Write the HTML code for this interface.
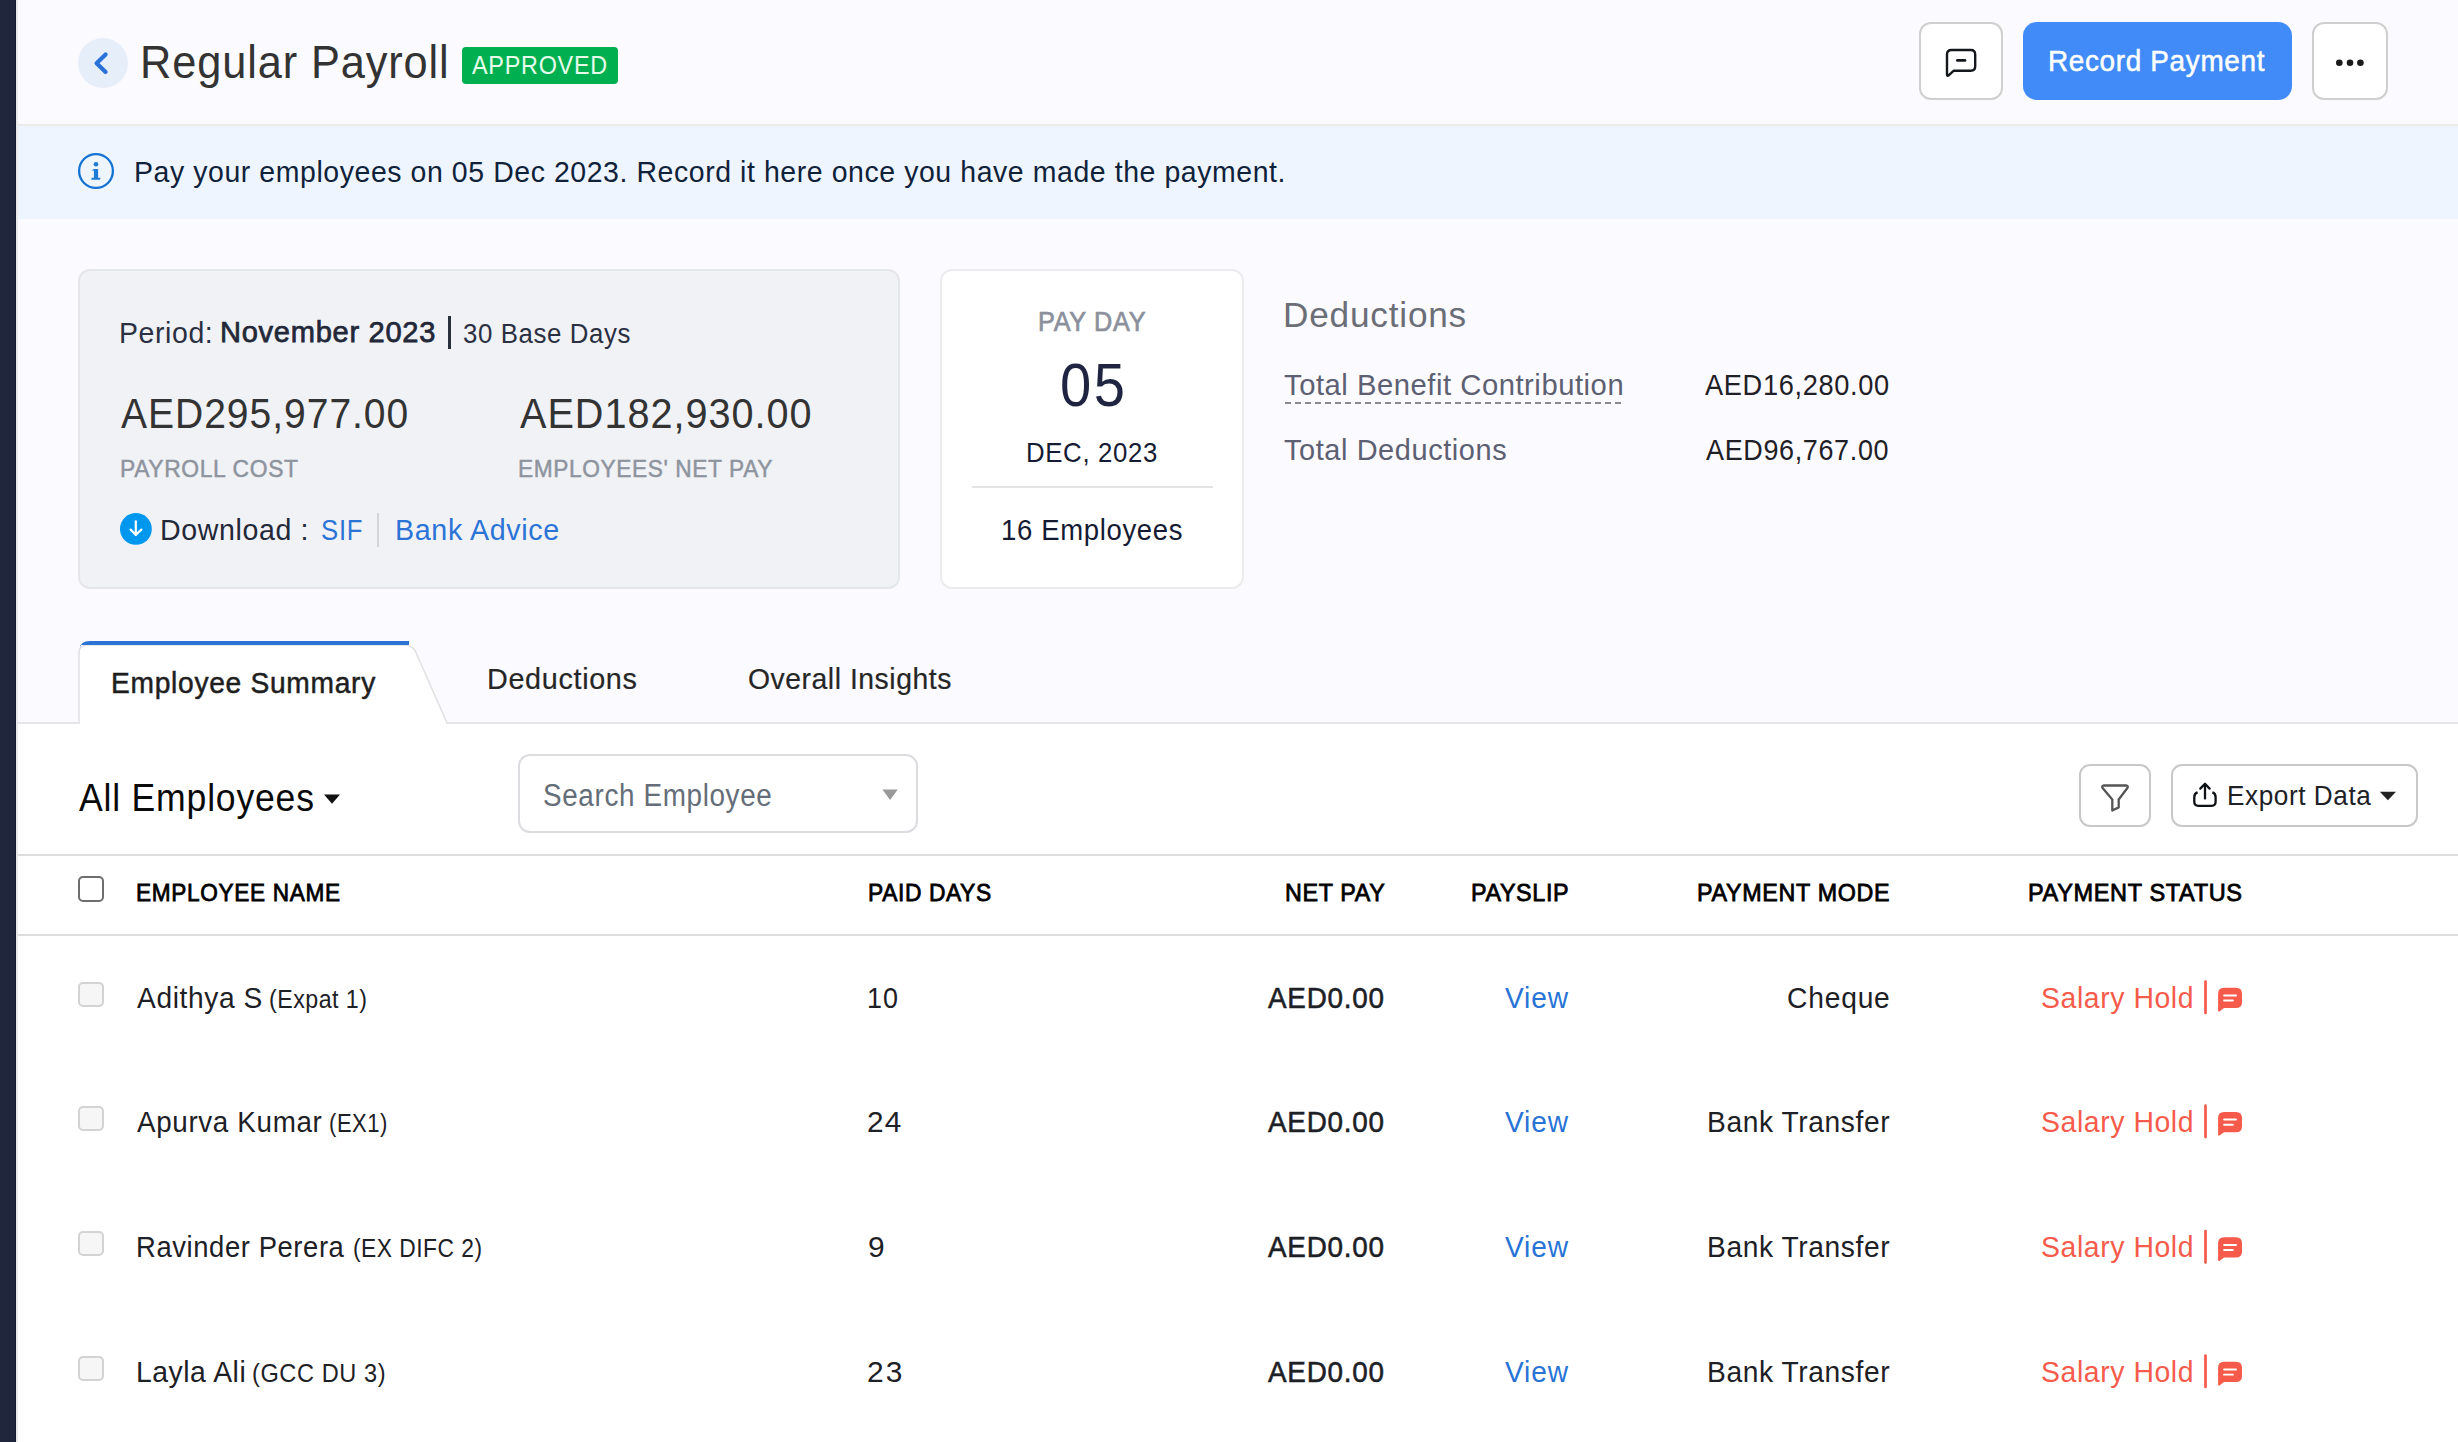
<!DOCTYPE html>
<html><head><meta charset="utf-8"><style>
*{margin:0;padding:0;box-sizing:border-box}
html,body{width:2458px;height:1442px;overflow:hidden;background:#fff;font-family:"Liberation Sans",sans-serif}
.a{position:absolute}
.t{position:absolute;white-space:pre}
</style></head><body>
<div class="a" style="left:0px;top:0px;width:15px;height:1442px;background:#20263B"></div><div class="a" style="left:15px;top:0px;width:1px;height:1442px;background:#151B2F"></div><div class="a" style="left:16px;top:0px;width:2px;height:1442px;background:#EAEAEA"></div><div class="a" style="left:18px;top:0px;width:2440px;height:124px;background:#FBFAFE"></div><div class="a" style="left:18px;top:124px;width:2440px;height:2px;background:#EBEBEA"></div><div class="a" style="left:18px;top:126px;width:2440px;height:93px;background:#EEF5FE"></div><div class="a" style="left:18px;top:219px;width:2440px;height:503px;background:#FBFAFE"></div><div class="a" style="left:18px;top:722px;width:2440px;height:2px;background:#E6E6E8"></div><div class="a" style="left:78px;top:38px;width:50px;height:50px;background:#E6EEF9;border-radius:50%"></div><div class="a" style="left:462px;top:47px;width:156px;height:37px;background:#00B050;border-radius:4px"></div><div class="a" style="left:1919px;top:22px;width:84px;height:78px;background:#fff;border:2px solid #CFCFCF;border-radius:12px"></div><div class="a" style="left:2023px;top:22px;width:269px;height:78px;background:#418BF9;border-radius:14px"></div><div class="a" style="left:2312px;top:22px;width:76px;height:78px;background:#fff;border:2px solid #CFCFCF;border-radius:12px"></div><div class="a" style="left:78px;top:269px;width:822px;height:320px;background:#F1F2F6;border:2px solid #E5E6EA;border-radius:12px"></div><div class="a" style="left:448px;top:316px;width:3px;height:33px;background:#2A2F3E"></div><div class="a" style="left:377px;top:513px;width:2px;height:34px;background:#D3D5DA"></div><div class="a" style="left:940px;top:269px;width:304px;height:320px;background:#fff;border:2px solid #EBEBF0;border-radius:12px"></div><div class="a" style="left:972px;top:486px;width:241px;height:2px;background:#E3E3E6"></div><div class="a" style="left:1285px;top:402px;width:338px;height:2px;background:repeating-linear-gradient(90deg,#8A8A8A 0 6px,transparent 6px 10px)"></div><div class="a" style="left:518px;top:754px;width:400px;height:79px;background:#fff;border:2px solid #DCDCE0;border-radius:12px"></div><div class="a" style="left:18px;top:854px;width:2440px;height:2px;background:#DCDCDD"></div><div class="a" style="left:2079px;top:764px;width:72px;height:63px;background:#fff;border:2px solid #C8C8C8;border-radius:11px"></div><div class="a" style="left:2171px;top:764px;width:247px;height:63px;background:#fff;border:2px solid #C8C8C8;border-radius:11px"></div><div class="a" style="left:78px;top:876px;width:26px;height:26px;background:#fff;border:2px solid #6E6E70;border-radius:5px"></div><div class="a" style="left:18px;top:934px;width:2440px;height:2px;background:#DCDCDD"></div><div class="a" style="left:78px;top:982px;width:26px;height:25px;background:#F6F6F6;border:2px solid #D3D3D3;border-radius:5px"></div><div class="a" style="left:78px;top:1106px;width:26px;height:25px;background:#F6F6F6;border:2px solid #D3D3D3;border-radius:5px"></div><div class="a" style="left:78px;top:1231px;width:26px;height:25px;background:#F6F6F6;border:2px solid #D3D3D3;border-radius:5px"></div><div class="a" style="left:78px;top:1356px;width:26px;height:25px;background:#F6F6F6;border:2px solid #D3D3D3;border-radius:5px"></div>
<svg class="a" style="left:0;top:0" width="2458" height="1442" viewBox="0 0 2458 1442"><path d="M79,723 L79,653 Q79,645 87,645 L404,645 Q411,645 415,650.5 L447,723 Z" fill="#fff" stroke="#E2E2E4" stroke-width="1.6"/><path d="M80,649 Q80,641 90,641 L409,641 L409,645 L80,645 Z" fill="#2B73D4"/><rect x="18" y="722" width="2440" height="2" fill="#E6E6E8"/><rect x="80" y="722" width="366" height="3" fill="#fff"/><path d="M105.6,54.4 L96.6,63.2 L105.6,71.9" fill="none" stroke="#2A72D8" stroke-width="4.2" stroke-linecap="round" stroke-linejoin="round"/><path d="M1947,74.5 L1947,54.5 Q1947,50 1951.5,50 L1970.7,50 Q1975.2,50 1975.2,54.5 L1975.2,66.2 Q1975.2,70.7 1970.7,70.7 L1953.8,70.7 L1948.6,75.4 Q1947,76.3 1947,74.5 Z" fill="none" stroke="#14171C" stroke-width="2.4" stroke-linejoin="round"/><path d="M1957.3,60.4 L1965,60.4" stroke="#14171C" stroke-width="2.6" stroke-linecap="round"/><circle cx="2339.3" cy="62.7" r="3.3" fill="#1A1A1A"/><circle cx="2350" cy="62.7" r="3.3" fill="#1A1A1A"/><circle cx="2360.4" cy="62.7" r="3.3" fill="#1A1A1A"/><circle cx="96" cy="171" r="16.9" fill="none" stroke="#1473D3" stroke-width="2.3"/><circle cx="96" cy="164.2" r="2.3" fill="#1E7BD6"/><path d="M91.5,170.6 L93.9,168.9 L98.1,168.9 L98.1,177.8 L100.5,177.8 L100,179.8 L91.2,179.8 L91.8,177.8 L93.9,177.8 L93.9,170.6 Z" fill="#1E7BD6"/><circle cx="135.9" cy="528.9" r="15.9" fill="#0098EE"/><path d="M135.8,521.3 L135.8,535" stroke="#fff" stroke-width="2.2" stroke-linecap="round"/><path d="M130.6,529.6 L135.8,534.8 L141.4,529.6" fill="none" stroke="#fff" stroke-width="2.2" stroke-linecap="round" stroke-linejoin="round"/><path d="M324,794.4 L340,794.4 L332,803.7 Z" fill="#111"/><path d="M882.4,789.4 L897.8,789.4 L890.1,800 Z" fill="#999"/><path d="M2103.5,785.5 L2126.5,785.5 Q2128.5,786 2127.4,788 L2118.7,799.5 L2118.7,807.4 L2112.3,810.5 L2112.3,799.5 L2102.6,788 Q2101.5,786 2103.5,785.5 Z" fill="none" stroke="#555" stroke-width="2.3" stroke-linejoin="round"/><path d="M2205,798.5 L2205,784.5 M2200.3,788.6 L2205,783.8 L2209.6,788.6" fill="none" stroke="#0E1116" stroke-width="2.3" stroke-linecap="round" stroke-linejoin="round"/><path d="M2197.6,792.3 Q2194.3,793.3 2194.3,797 L2194.3,801.8 Q2194.3,805.8 2198.3,805.8 L2211.6,805.8 Q2215.6,805.8 2215.6,801.8 L2215.6,797 Q2215.6,793.3 2212.4,792.3" fill="none" stroke="#0E1116" stroke-width="2.3" stroke-linecap="butt"/><path d="M2379.8,791.8 L2396,791.8 L2387.9,800.2 Z" fill="#222"/><path d="M2205.5,981.5 L2205.5,1012.9" stroke="#F65A4A" stroke-width="2.7" stroke-linecap="round"/><path d="M2224,987.7 L2236,987.7 Q2242,987.7 2242,993.7 L2242,1002.0 Q2242,1008.0 2236,1008.0 L2224,1008.0 L2219.5,1011.4 Q2218.1,1012.0 2218.1,1010.4 L2218.1,993.7 Q2218.1,987.7 2224,987.7 Z" fill="#F65A4A"/><rect x="2223.1" y="994.4" width="13.9" height="2" rx="1" fill="#fff"/><rect x="2223.1" y="999.6" width="10.7" height="1.9" rx="0.9" fill="#fff"/><path d="M2205.5,1105.7 L2205.5,1137.1" stroke="#F65A4A" stroke-width="2.7" stroke-linecap="round"/><path d="M2224,1111.9 L2236,1111.9 Q2242,1111.9 2242,1117.9 L2242,1126.2 Q2242,1132.2 2236,1132.2 L2224,1132.2 L2219.5,1135.6 Q2218.1,1136.2 2218.1,1134.6 L2218.1,1117.9 Q2218.1,1111.9 2224,1111.9 Z" fill="#F65A4A"/><rect x="2223.1" y="1118.6" width="13.9" height="2" rx="1" fill="#fff"/><rect x="2223.1" y="1123.8" width="10.7" height="1.9" rx="0.9" fill="#fff"/><path d="M2205.5,1231.0 L2205.5,1262.4" stroke="#F65A4A" stroke-width="2.7" stroke-linecap="round"/><path d="M2224,1237.2 L2236,1237.2 Q2242,1237.2 2242,1243.2 L2242,1251.5 Q2242,1257.5 2236,1257.5 L2224,1257.5 L2219.5,1260.9 Q2218.1,1261.5 2218.1,1259.9 L2218.1,1243.2 Q2218.1,1237.2 2224,1237.2 Z" fill="#F65A4A"/><rect x="2223.1" y="1243.9" width="13.9" height="2" rx="1" fill="#fff"/><rect x="2223.1" y="1249.1" width="10.7" height="1.9" rx="0.9" fill="#fff"/><path d="M2205.5,1355.6 L2205.5,1387.0" stroke="#F65A4A" stroke-width="2.7" stroke-linecap="round"/><path d="M2224,1361.8 L2236,1361.8 Q2242,1361.8 2242,1367.8 L2242,1376.1 Q2242,1382.1 2236,1382.1 L2224,1382.1 L2219.5,1385.5 Q2218.1,1386.1 2218.1,1384.5 L2218.1,1367.8 Q2218.1,1361.8 2224,1361.8 Z" fill="#F65A4A"/><rect x="2223.1" y="1368.5" width="13.9" height="2" rx="1" fill="#fff"/><rect x="2223.1" y="1373.7" width="10.7" height="1.9" rx="0.9" fill="#fff"/></svg>
<div class="t" style="left:140.20px;top:38.70px;font-size:46.948px;line-height:46.948px;letter-spacing:0.935px;color:#333333;font-weight:normal;transform:scaleX(0.9242);transform-origin:0 0">Regular Payroll</div>
<div class="t" style="left:472.00px;top:52.00px;font-size:26.018px;line-height:26.018px;letter-spacing:0.851px;color:#E6FCEB;font-weight:normal;transform:scaleX(0.8982);transform-origin:0 0">APPROVED</div>
<div class="t" style="left:2048.41px;top:46.05px;font-size:29.506px;line-height:29.506px;letter-spacing:0.699px;color:#FFFFFF;font-weight:normal;-webkit-text-stroke:0.5px #FFFFFF;transform:scaleX(0.9459);transform-origin:0 0">Record Payment</div>
<div class="t" style="left:134.21px;top:156.85px;font-size:30.160px;line-height:30.160px;letter-spacing:0.608px;color:#10223A;font-weight:normal;transform:scaleX(0.9435);transform-origin:0 0">Pay your employees on 05 Dec 2023. Record it here once you have made the payment.</div>
<div class="t" style="left:119.31px;top:318.40px;font-size:30.088px;line-height:30.088px;letter-spacing:0.632px;color:#2A3042;font-weight:normal;transform:scaleX(0.9463);transform-origin:0 0">Period:</div>
<div class="t" style="left:220.14px;top:317.40px;font-size:29.724px;line-height:29.724px;letter-spacing:0.726px;color:#232838;font-weight:normal;-webkit-text-stroke:0.75px #232838;transform:scaleX(0.9784);transform-origin:0 0">November 2023</div>
<div class="t" style="left:462.68px;top:319.40px;font-size:28.198px;line-height:28.198px;letter-spacing:0.659px;color:#2A3042;font-weight:normal;transform:scaleX(0.9159);transform-origin:0 0">30 Base Days</div>
<div class="t" style="left:121.00px;top:392.00px;font-size:42.879px;line-height:42.879px;letter-spacing:1.045px;color:#333333;font-weight:normal;transform:scaleX(0.9115);transform-origin:0 0">AED295,977.00</div>
<div class="t" style="left:519.80px;top:392.00px;font-size:42.879px;line-height:42.879px;letter-spacing:1.045px;color:#333333;font-weight:normal;transform:scaleX(0.9249);transform-origin:0 0">AED182,930.00</div>
<div class="t" style="left:119.84px;top:456.80px;font-size:24.564px;line-height:24.564px;letter-spacing:0.689px;color:#8E949E;font-weight:normal;-webkit-text-stroke:0.5px #8E949E;transform:scaleX(0.9305);transform-origin:0 0">PAYROLL COST</div>
<div class="t" style="left:517.75px;top:456.80px;font-size:24.564px;line-height:24.564px;letter-spacing:0.640px;color:#8E949E;font-weight:normal;-webkit-text-stroke:0.5px #8E949E;transform:scaleX(0.9258);transform-origin:0 0">EMPLOYEES' NET PAY</div>
<div class="t" style="left:159.80px;top:515.40px;font-size:30.088px;line-height:30.088px;letter-spacing:0.676px;color:#232838;font-weight:normal;transform:scaleX(0.9488);transform-origin:0 0">Download :</div>
<div class="t" style="left:320.89px;top:515.40px;font-size:30.088px;line-height:30.088px;letter-spacing:0.917px;color:#2B74D6;font-weight:normal;transform:scaleX(0.8553);transform-origin:0 0">SIF</div>
<div class="t" style="left:394.99px;top:515.40px;font-size:30.088px;line-height:30.088px;letter-spacing:0.675px;color:#2B74D6;font-weight:normal;transform:scaleX(0.9535);transform-origin:0 0">Bank Advice</div>
<div class="t" style="left:1038.04px;top:308.96px;font-size:27.050px;line-height:27.050px;letter-spacing:0.750px;color:#8B909C;font-weight:normal;-webkit-text-stroke:0.7px #8B909C;transform:scaleX(0.9324);transform-origin:0 0">PAY DAY</div>
<div class="t" style="left:1059.75px;top:355.10px;font-size:60.757px;line-height:60.757px;letter-spacing:2.625px;color:#1F2540;font-weight:normal;transform:scaleX(0.9250);transform-origin:0 0">05</div>
<div class="t" style="left:1026.25px;top:439.05px;font-size:27.835px;line-height:27.835px;letter-spacing:0.693px;color:#151B33;font-weight:normal;transform:scaleX(0.9268);transform-origin:0 0">DEC, 2023</div>
<div class="t" style="left:1001.05px;top:515.00px;font-size:29.797px;line-height:29.797px;letter-spacing:0.705px;color:#151B33;font-weight:normal;transform:scaleX(0.9239);transform-origin:0 0">16 Employees</div>
<div class="t" style="left:1283.24px;top:297.80px;font-size:35.611px;line-height:35.611px;letter-spacing:0.806px;color:#6B6E77;font-weight:normal;transform:scaleX(0.9881);transform-origin:0 0">Deductions</div>
<div class="t" style="left:1284.12px;top:370.00px;font-size:29.797px;line-height:29.797px;letter-spacing:0.550px;color:#5C6072;font-weight:normal;transform:scaleX(0.9801);transform-origin:0 0">Total Benefit Contribution</div>
<div class="t" style="left:1704.50px;top:369.80px;font-size:29.361px;line-height:29.361px;letter-spacing:0.720px;color:#1F2026;font-weight:normal;transform:scaleX(0.9261);transform-origin:0 0">AED16,280.00</div>
<div class="t" style="left:1284.11px;top:434.60px;font-size:29.361px;line-height:29.361px;letter-spacing:0.597px;color:#5C6072;font-weight:normal;transform:scaleX(0.9850);transform-origin:0 0">Total Deductions</div>
<div class="t" style="left:1706.20px;top:434.60px;font-size:29.361px;line-height:29.361px;letter-spacing:0.720px;color:#1F2026;font-weight:normal;transform:scaleX(0.9176);transform-origin:0 0">AED96,767.00</div>
<div class="t" style="left:111.43px;top:668.80px;font-size:28.634px;line-height:28.634px;letter-spacing:0.711px;color:#1E1E1E;font-weight:normal;-webkit-text-stroke:0.5px #1E1E1E;transform:scaleX(0.9848);transform-origin:0 0">Employee Summary</div>
<div class="t" style="left:486.85px;top:664.20px;font-size:29.506px;line-height:29.506px;letter-spacing:0.671px;color:#262626;font-weight:normal;-webkit-text-stroke:0.2px #262626;transform:scaleX(0.9759);transform-origin:0 0">Deductions</div>
<div class="t" style="left:747.54px;top:664.20px;font-size:29.506px;line-height:29.506px;letter-spacing:0.558px;color:#262626;font-weight:normal;-webkit-text-stroke:0.2px #262626;transform:scaleX(0.9605);transform-origin:0 0">Overall Insights</div>
<div class="t" style="left:78.90px;top:778.80px;font-size:38.663px;line-height:38.663px;letter-spacing:0.844px;color:#0A0A0A;font-weight:normal;transform:scaleX(0.9213);transform-origin:0 0">All Employees</div>
<div class="t" style="left:543.38px;top:780.30px;font-size:30.669px;line-height:30.669px;letter-spacing:0.711px;color:#646D78;font-weight:normal;transform:scaleX(0.9082);transform-origin:0 0">Search Employee</div>
<div class="t" style="left:2227.09px;top:781.90px;font-size:27.471px;line-height:27.471px;letter-spacing:0.596px;color:#1E2126;font-weight:normal;transform:scaleX(0.9526);transform-origin:0 0">Export Data</div>
<div class="t" style="left:135.76px;top:880.80px;font-size:24.564px;line-height:24.564px;letter-spacing:0.729px;color:#000000;font-weight:normal;-webkit-text-stroke:0.8px #000000;transform:scaleX(0.9207);transform-origin:0 0">EMPLOYEE NAME</div>
<div class="t" style="left:867.84px;top:880.80px;font-size:24.564px;line-height:24.564px;letter-spacing:0.651px;color:#000000;font-weight:normal;-webkit-text-stroke:0.8px #000000;transform:scaleX(0.9293);transform-origin:0 0">PAID DAYS</div>
<div class="t" style="left:1284.60px;top:880.80px;font-size:24.564px;line-height:24.564px;letter-spacing:0.688px;color:#000000;font-weight:normal;-webkit-text-stroke:0.8px #000000;transform:scaleX(0.9493);transform-origin:0 0">NET PAY</div>
<div class="t" style="left:1471.10px;top:880.80px;font-size:24.564px;line-height:24.564px;letter-spacing:0.667px;color:#000000;font-weight:normal;-webkit-text-stroke:0.8px #000000;transform:scaleX(0.9500);transform-origin:0 0">PAYSLIP</div>
<div class="t" style="left:1696.50px;top:880.80px;font-size:24.564px;line-height:24.564px;letter-spacing:0.731px;color:#000000;font-weight:normal;-webkit-text-stroke:0.8px #000000;transform:scaleX(0.9481);transform-origin:0 0">PAYMENT MODE</div>
<div class="t" style="left:2027.88px;top:880.80px;font-size:24.564px;line-height:24.564px;letter-spacing:0.679px;color:#000000;font-weight:normal;-webkit-text-stroke:0.8px #000000;transform:scaleX(0.9577);transform-origin:0 0">PAYMENT STATUS</div>
<div class="t" style="left:136.90px;top:982.80px;font-size:29.942px;line-height:29.942px;letter-spacing:0.661px;color:#1D2025;font-weight:normal;transform:scaleX(0.9396);transform-origin:0 0">Adithya S</div>
<div class="t" style="left:269.07px;top:986.80px;font-size:25.436px;line-height:25.436px;letter-spacing:0.521px;color:#1D2025;font-weight:normal;transform:scaleX(0.9130);transform-origin:0 0">(Expat 1)</div>
<div class="t" style="left:867.30px;top:982.80px;font-size:29.942px;line-height:29.942px;letter-spacing:1.250px;color:#1D2025;font-weight:normal;transform:scaleX(0.8992);transform-origin:0 0">10</div>
<div class="t" style="left:1268.30px;top:982.80px;font-size:29.434px;line-height:29.434px;letter-spacing:0.812px;color:#1D2025;font-weight:normal;-webkit-text-stroke:0.55px #1D2025;transform:scaleX(0.9461);transform-origin:0 0">AED0.00</div>
<div class="t" style="left:1504.60px;top:982.80px;font-size:29.942px;line-height:29.942px;letter-spacing:0.889px;color:#2874D6;font-weight:normal;transform:scaleX(0.9390);transform-origin:0 0">View</div>
<div class="t" style="left:1787.22px;top:982.80px;font-size:29.942px;line-height:29.942px;letter-spacing:0.850px;color:#1D2025;font-weight:normal;transform:scaleX(0.9421);transform-origin:0 0">Cheque</div>
<div class="t" style="left:2040.99px;top:982.80px;font-size:29.652px;line-height:29.652px;letter-spacing:0.621px;color:#F65B4B;font-weight:normal;transform:scaleX(0.9568);transform-origin:0 0">Salary Hold</div>
<div class="t" style="left:136.60px;top:1107.00px;font-size:29.942px;line-height:29.942px;letter-spacing:0.723px;color:#1D2025;font-weight:normal;transform:scaleX(0.9273);transform-origin:0 0">Apurva Kumar</div>
<div class="t" style="left:328.87px;top:1111.00px;font-size:25.436px;line-height:25.436px;letter-spacing:0.635px;color:#1D2025;font-weight:normal;transform:scaleX(0.8656);transform-origin:0 0">(EX1)</div>
<div class="t" style="left:867.11px;top:1107.00px;font-size:29.942px;line-height:29.942px;letter-spacing:1.292px;color:#1D2025;font-weight:normal;transform:scaleX(0.9941);transform-origin:0 0">24</div>
<div class="t" style="left:1268.30px;top:1107.00px;font-size:29.434px;line-height:29.434px;letter-spacing:0.812px;color:#1D2025;font-weight:normal;-webkit-text-stroke:0.55px #1D2025;transform:scaleX(0.9461);transform-origin:0 0">AED0.00</div>
<div class="t" style="left:1504.60px;top:1107.00px;font-size:29.942px;line-height:29.942px;letter-spacing:0.889px;color:#2874D6;font-weight:normal;transform:scaleX(0.9390);transform-origin:0 0">View</div>
<div class="t" style="left:1706.92px;top:1107.00px;font-size:29.942px;line-height:29.942px;letter-spacing:0.639px;color:#1D2025;font-weight:normal;transform:scaleX(0.9412);transform-origin:0 0">Bank Transfer</div>
<div class="t" style="left:2040.99px;top:1107.00px;font-size:29.652px;line-height:29.652px;letter-spacing:0.621px;color:#F65B4B;font-weight:normal;transform:scaleX(0.9568);transform-origin:0 0">Salary Hold</div>
<div class="t" style="left:136.22px;top:1232.30px;font-size:29.942px;line-height:29.942px;letter-spacing:0.643px;color:#1D2025;font-weight:normal;transform:scaleX(0.9158);transform-origin:0 0">Ravinder Perera</div>
<div class="t" style="left:353.01px;top:1236.30px;font-size:25.436px;line-height:25.436px;letter-spacing:0.562px;color:#1D2025;font-weight:normal;transform:scaleX(0.8960);transform-origin:0 0">(EX DIFC 2)</div>
<div class="t" style="left:868.10px;top:1232.30px;font-size:29.942px;line-height:29.942px;letter-spacing:0.000px;color:#1D2025;font-weight:normal">9</div>
<div class="t" style="left:1268.30px;top:1232.30px;font-size:29.434px;line-height:29.434px;letter-spacing:0.812px;color:#1D2025;font-weight:normal;-webkit-text-stroke:0.55px #1D2025;transform:scaleX(0.9461);transform-origin:0 0">AED0.00</div>
<div class="t" style="left:1504.60px;top:1232.30px;font-size:29.942px;line-height:29.942px;letter-spacing:0.889px;color:#2874D6;font-weight:normal;transform:scaleX(0.9390);transform-origin:0 0">View</div>
<div class="t" style="left:1706.92px;top:1232.30px;font-size:29.942px;line-height:29.942px;letter-spacing:0.639px;color:#1D2025;font-weight:normal;transform:scaleX(0.9412);transform-origin:0 0">Bank Transfer</div>
<div class="t" style="left:2040.99px;top:1232.30px;font-size:29.652px;line-height:29.652px;letter-spacing:0.621px;color:#F65B4B;font-weight:normal;transform:scaleX(0.9568);transform-origin:0 0">Salary Hold</div>
<div class="t" style="left:136.16px;top:1356.90px;font-size:29.942px;line-height:29.942px;letter-spacing:0.557px;color:#1D2025;font-weight:normal;transform:scaleX(0.9461);transform-origin:0 0">Layla Ali</div>
<div class="t" style="left:251.90px;top:1360.90px;font-size:25.436px;line-height:25.436px;letter-spacing:0.625px;color:#1D2025;font-weight:normal;transform:scaleX(0.9269);transform-origin:0 0">(GCC DU 3)</div>
<div class="t" style="left:867.10px;top:1356.90px;font-size:29.942px;line-height:29.942px;letter-spacing:2.100px;color:#1D2025;font-weight:normal">23</div>
<div class="t" style="left:1268.30px;top:1356.90px;font-size:29.434px;line-height:29.434px;letter-spacing:0.812px;color:#1D2025;font-weight:normal;-webkit-text-stroke:0.55px #1D2025;transform:scaleX(0.9461);transform-origin:0 0">AED0.00</div>
<div class="t" style="left:1504.60px;top:1356.90px;font-size:29.942px;line-height:29.942px;letter-spacing:0.889px;color:#2874D6;font-weight:normal;transform:scaleX(0.9390);transform-origin:0 0">View</div>
<div class="t" style="left:1706.92px;top:1356.90px;font-size:29.942px;line-height:29.942px;letter-spacing:0.639px;color:#1D2025;font-weight:normal;transform:scaleX(0.9412);transform-origin:0 0">Bank Transfer</div>
<div class="t" style="left:2040.99px;top:1356.90px;font-size:29.652px;line-height:29.652px;letter-spacing:0.621px;color:#F65B4B;font-weight:normal;transform:scaleX(0.9568);transform-origin:0 0">Salary Hold</div>
</body></html>
